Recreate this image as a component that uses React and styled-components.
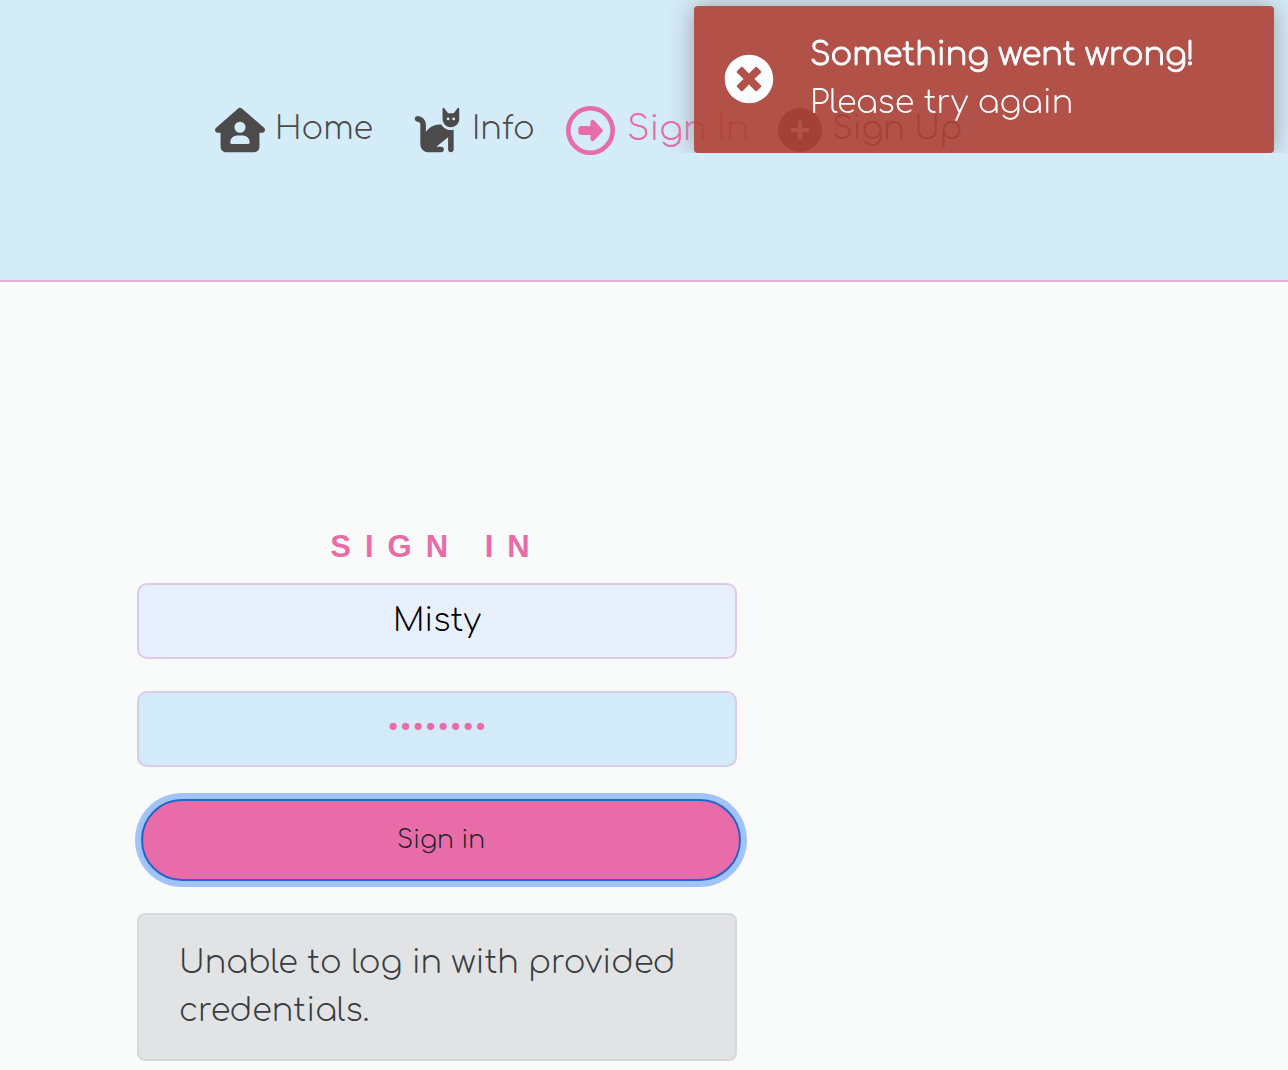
import React from "react";
import styled, { createGlobalStyle } from "styled-components";
import { FaHouseUser, FaCat, FaRegCircleRight, FaCirclePlus } from "react-icons/fa6";
import { FaTimesCircle } from "react-icons/fa";

const GlobalStyle = createGlobalStyle`
  *, *::before, *::after { box-sizing: border-box; }
  body {
    margin: 0;
    background: #f9fbfa;
    color: #4d4a4b;
    font-family: Comfortaa, Lato, "Open Sans", sans-serif;
    font-weight: 300;
    font-size: 32px;
    line-height: 48px;
  }
  button, input { font: inherit; }
`;

const Header = styled.header`
  background: #d4ebf8;
  border-bottom: 2px solid #e3aed3;
  padding: 104px 32px 124px 215px;
`;

const Nav = styled.nav`
  display: grid;
  grid-template-columns: 197px 154px 212px auto;
  justify-content: start;
  align-items: center;
`;

const NavLink = styled.a`
  display: flex;
  align-items: center;
  gap: ${(p) => (p.$active ? "12px" : "10px")};
  height: 52px;
  color: ${(p) => (p.$active ? "#e86ca8" : "#4d4a4b")};
  font-size: ${(p) => (p.$active ? "35px" : "32px")};
  text-decoration: none;
  white-space: nowrap;
`;

const NavText = styled.span`
  padding-bottom: 2px;
`;

const NavIcon = styled.span`
  display: flex;

  svg {
    width: ${(p) => p.$size}px;
    height: ${(p) => p.$size}px;
  }
`;

const ToastArea = styled.div`
  position: fixed;
  z-index: 10;
  top: 0;
  right: 0;
  width: 624px;
  max-width: 100%;
  padding: 6px 14px 0 30px;
  overflow: hidden;
`;

const Toast = styled.div`
  display: flex;
  align-items: center;
  gap: 36px;
  padding: 25px 30px 26px;
  border-radius: 4px;
  background: #ae4134;
  color: #fff;
  box-shadow: 0 0 24px #999;
  opacity: 0.9;

  svg {
    flex: none;
    font-size: 50px;
  }
`;

const ToastTitle = styled.strong`
  display: block;
  font-weight: 300;
  -webkit-text-stroke: 1px currentColor;
`;

const ToastMessage = styled.span`
  display: block;
`;

const Main = styled.main`
  padding: 241px 32px 9px 137px;
`;

const Form = styled.form`
  display: flex;
  flex-direction: column;
  gap: 32px;
  max-width: 600px;
`;

const Title = styled.h1`
  margin: 0 0 -20px;
  color: #e86ca8;
  font: 700 31px/48px "Liberation Sans", Arial, sans-serif;
  letter-spacing: 14px;
  text-align: center;
  text-transform: uppercase;
`;

const Field = styled.input`
  display: block;
  width: 100%;
  height: 76px;
  padding: 12px 24px 14px;
  border: 2px solid #dccbe8;
  border-radius: 10px;
  outline: none;
  background: ${(p) => (p.$filled ? "#e8effd" : "#d3eaf8")};
  color: ${(p) => (p.$filled ? "#000" : "#e86ca8")};
  text-align: center;
`;

const SubmitButton = styled.button`
  width: 100%;
  height: 82px;
  margin-left: 4px;
  border: 2px solid #2763c8;
  border-radius: 41px;
  outline: none;
  background: #e86ca8;
  color: #212529;
  font-size: 25px;
  box-shadow: 0 0 0 6px #a0c3fa;
  cursor: pointer;
`;

const Alert = styled.div`
  padding: 24px 40px;
  border: 2px solid #d6d8db;
  border-radius: 8px;
  background: #e2e3e5;
  color: #383d41;
`;

const links = [
  { label: "Home", icon: FaHouseUser, size: 50 },
  { label: "Info", icon: FaCat, size: 50 },
  { label: "Sign In", icon: FaRegCircleRight, size: 49, active: true },
  { label: "Sign Up", icon: FaCirclePlus, size: 44 },
];

export default function App() {
  return (
    <>
      <GlobalStyle />
      <Header>
        <Nav>
          {links.map(({ label, icon: Icon, size, active }) => (
            <NavLink key={label} href="#" $active={active}>
              <NavIcon $size={size}><Icon aria-hidden="true" /></NavIcon>
              <NavText>{label}</NavText>
            </NavLink>
          ))}
        </Nav>
      </Header>
      <ToastArea>
        <Toast role="alert">
          <FaTimesCircle aria-hidden="true" />
          <div>
            <ToastTitle>Something went wrong!</ToastTitle>
            <ToastMessage>Please try again</ToastMessage>
          </div>
        </Toast>
      </ToastArea>
      <Main>
        <Form onSubmit={(e) => e.preventDefault()}>
          <Title>Sign in</Title>
          <Field aria-label="Username" type="text" defaultValue="Misty" $filled />
          <Field aria-label="Password" type="password" defaultValue="password" />
          <SubmitButton type="submit">Sign in</SubmitButton>
          <Alert role="alert">Unable to log in with provided credentials.</Alert>
        </Form>
      </Main>
    </>
  );
}
